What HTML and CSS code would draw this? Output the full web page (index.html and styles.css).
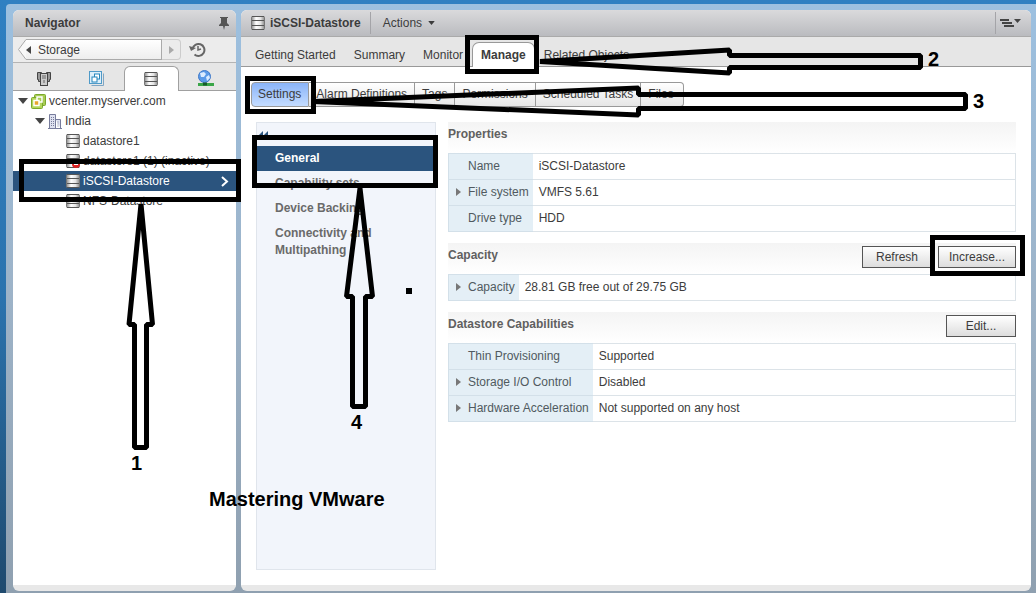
FILE: index.html
```html
<!DOCTYPE html>
<html lang="en">
<head>
  <meta charset="UTF-8">
  <meta name="viewport" content="width=device-width,initial-scale=1.0">
  <title>iSCSI-Datastore - Manage</title>
  <link rel="stylesheet" href="styles.css">
</head>
<body>
  <!-- shared icons -->
  <svg class="defs" width="0" height="0">
    <defs>
      <linearGradient id="metal" x1="0" x2="1">
        <stop offset="0" stop-color="#8a8a8a"/>
        <stop offset=".35" stop-color="#fff"/>
        <stop offset=".7" stop-color="#e4e4e4"/>
        <stop offset="1" stop-color="#8a8a8a"/>
      </linearGradient>
      <symbol id="ds" viewBox="0 0 14 14">
        <rect x=".5" y=".5" width="13" height="13" rx="1" fill="url(#metal)" stroke="#777"/>
        <path d="M1 .5h12M1 4.500h12M1 9.500h12M1 13.500h12" stroke="#555"/>
      </symbol>
      <symbol id="right" viewBox="0 0 5 8"><path d="M0 0l5 4-5 4z" fill="currentColor"/></symbol>
      <symbol id="down" viewBox="0 0 10 6"><path d="M0 0h10L5 6z" fill="currentColor"/></symbol>
    </defs>
  </svg>

  <div class="shell">
    <aside class="panel navigator">
      <header class="titlebar">
        <h2>Navigator</h2>
        <svg class="pin" width="10" height="13" viewBox="0 0 10 13"><path d="M1 0h8v1H8v5l2 2v1H6l-1 4-1-4H0V8l2-2V1H1z" fill="#555"/></svg>
      </header>

      <div class="history">
        <button type="button" class="back">
          <svg width="8" height="21" viewBox="0 0 8 21"><path d="M8 .5L.5 10.500 8 20.500" fill="#f8f8f8" stroke="#aaa"/></svg>
          <span class="back-label"><svg width="5" height="8"><path d="M5 0L0 4l5 4z" fill="#444"/></svg>Storage</span>
        </button>
        <button type="button" class="forward" aria-label="Forward"><svg width="5" height="8"><use href="#right"/></svg></button>
        <button type="button" class="recent" aria-label="Recent">
          <svg width="17" height="16" viewBox="0 0 17 16" fill="none" stroke="#666" stroke-width="2"><path d="M3.500 7a6 6 0 1 1 2 5.500"/><path d="M0 4l2 5 5-3z" fill="#666" stroke="none"/><path d="M9 4v4l3-1" stroke-width="1.500"/></svg>
        </button>
      </div>

      <nav class="icon-tabs">
        <button type="button" aria-label="Hosts">
          <svg width="14" height="16" viewBox="0 0 14 16"><path d="M.5 1.500h4v9h-3v-2h-1zM9.500 1.500h4v7h-1v2h-3z" fill="#999" stroke="#444"/><rect x="3.500" y="2.500" width="7" height="12" fill="#ccc" stroke="#444"/><path d="M5 5h4M5 7h4M7 9v3" stroke="#666"/></svg>
        </button>
        <button type="button" aria-label="Virtual machines">
          <svg width="15" height="15" viewBox="0 0 15 15"><path d="M2.500 14.500h12v-12" fill="none" stroke="#7fa6c4"/><rect x=".5" y=".5" width="12" height="12" fill="#dceffb" stroke="#4f9ac8"/><rect x="5.500" y="3" width="5" height="5" fill="#fff" stroke="#2586bd"/><rect x="3" y="6" width="5" height="5" fill="#fff" stroke="#2586bd"/></svg>
        </button>
        <button type="button" class="active" aria-label="Storage"><svg width="14" height="14"><use href="#ds"/></svg></button>
        <button type="button" aria-label="Networking">
          <svg width="17" height="17" viewBox="0 0 17 17"><circle cx="7.500" cy="6.500" r="6" fill="#5c9be8" stroke="#3f78c8"/><path d="M3 3l4-1 2 2-2 3H4zM9 7l3-2 1 3-3 3z" fill="#dcecff"/><path d="M1 14.500h16" stroke="#3aa648" stroke-width="3"/><path d="M6 14h4" stroke="#165c2a" stroke-width="3"/></svg>
        </button>
      </nav>

      <ul class="tree">
        <li class="lvl0">
          <svg class="twist" width="10" height="6"><use href="#down"/></svg>
          <svg width="15" height="15" viewBox="0 0 15 15"><rect x="3.500" y=".5" width="11" height="11" rx="1" fill="#a8cc54" stroke="#7aa82c"/><rect x=".5" y="3.500" width="11" height="11" rx="1" fill="#b4d65c" stroke="#7aa82c"/><rect x="6" y="3" width="5" height="5" fill="#a8cc54" stroke="#fff" stroke-width="1.500"/><rect x="3" y="6.500" width="5" height="5" fill="#e8a52c" stroke="#fff" stroke-width="1.500"/></svg>
          <a href="#">vcenter.myserver.com</a>
        </li>
        <li class="lvl1">
          <svg class="twist" width="10" height="6"><use href="#down"/></svg>
          <svg width="14" height="15" viewBox="0 0 14 15"><path d="M1.500 14V.5h6V14M7.500 5.500h5V14M0 14.500h14" fill="#dfe2f0" stroke="#777c9c"/><path d="M3.500 3v10M5.500 3v10M10 7.500v6" stroke="#777c9c" stroke-dasharray="1 1"/></svg>
          <a href="#">India</a>
        </li>
        <li class="lvl2"><svg width="14" height="14"><use href="#ds"/></svg><a href="#">datastore1</a></li>
        <li class="lvl2">
          <svg width="14" height="14"><use href="#ds"/><circle cx="10" cy="10" r="4" fill="#d22"/><path d="M8 10h4" stroke="#fff" stroke-width="2"/></svg>
          <a href="#">datastore1 (1) (inactive)</a>
        </li>
        <li class="lvl2 selected">
          <svg width="14" height="14"><use href="#ds"/></svg><a href="#">iSCSI-Datastore</a>
          <svg class="go" width="8" height="11"><path d="M1 1l5 4.500L1 10" fill="none" stroke="#fff" stroke-width="2"/></svg>
        </li>
        <li class="lvl2"><svg width="14" height="14"><use href="#ds"/></svg><a href="#">NFS-Datastore</a></li>
      </ul>
    </aside>

    <main class="panel workspace">
      <header class="titlebar">
        <svg width="14" height="14"><use href="#ds"/></svg>
        <h1>iSCSI-Datastore</h1>
        <button type="button" class="actions">Actions <svg width="7" height="4" viewBox="0 0 10 6"><use href="#down"/></svg></button>
        <button type="button" class="list-menu" aria-label="View menu">
          <svg width="21" height="9" viewBox="0 0 21 9"><path d="M0 1h9M2 4h10M4 7h10" stroke="#444" stroke-width="2"/><path d="M14 0h7l-3.500 4z" fill="#444"/></svg>
        </button>
      </header>

      <nav class="tabs">
        <a href="#">Getting Started</a>
        <a href="#">Summary</a>
        <a href="#">Monitor</a>
        <a href="#" class="active">Manage</a>
        <a href="#">Related Objects</a>
      </nav>

      <div class="body">
        <nav class="subtabs">
          <button type="button" class="active">Settings</button>
          <button type="button">Alarm Definitions</button>
          <button type="button">Tags</button>
          <button type="button">Permissions</button>
          <button type="button">Scheduled Tasks</button>
          <button type="button">Files</button>
        </nav>

        <div class="columns">
          <nav class="sections">
            <button type="button" class="collapse" aria-label="Collapse"><svg width="10" height="8"><path d="M4 0v8L0 4zM9 0v8L5 4z" fill="#2b547e"/></svg></button>
            <a href="#" class="active">General</a>
            <a href="#">Capability sets</a>
            <a href="#">Device Backing</a>
            <a href="#">Connectivity and Multipathing</a>
          </nav>

          <div class="details">
            <section>
              <div class="section-head"><h3>Properties</h3></div>
              <table>
                <tr><th scope="row">Name</th><td>iSCSI-Datastore</td></tr>
                <tr><th scope="row" class="more"><svg width="5" height="8"><use href="#right"/></svg>File system</th><td>VMFS 5.61</td></tr>
                <tr><th scope="row">Drive type</th><td>HDD</td></tr>
              </table>
            </section>

            <section>
              <div class="section-head">
                <h3>Capacity</h3>
                <button type="button">Refresh</button>
                <button type="button" class="wide">Increase...</button>
              </div>
              <table>
                <tr><th scope="row" class="more"><svg width="5" height="8"><use href="#right"/></svg>Capacity</th><td>28.81 GB free out of 29.75 GB</td></tr>
              </table>
            </section>

            <section>
              <div class="section-head">
                <h3>Datastore Capabilities</h3>
                <button type="button">Edit...</button>
              </div>
              <table>
                <tr><th scope="row">Thin Provisioning</th><td>Supported</td></tr>
                <tr><th scope="row" class="more"><svg width="5" height="8"><use href="#right"/></svg>Storage I/O Control</th><td>Disabled</td></tr>
                <tr><th scope="row" class="more"><svg width="5" height="8"><use href="#right"/></svg>Hardware Acceleration</th><td>Not supported on any host</td></tr>
              </table>
            </section>
          </div>
        </div>
      </div>
    </main>
  </div>

  <!-- walkthrough callouts, steps 1 to 4 -->
  <svg class="callouts" width="1036" height="593" viewBox="0 0 1036 593">
    <g class="marks">
      <rect x="21.500" y="161.500" width="217" height="38"/>
      <rect x="467.500" y="37.500" width="69" height="34"/>
      <rect x="247.500" y="78.500" width="66" height="33"/>
      <rect x="254.500" y="137.500" width="181" height="48"/>
      <rect x="932.500" y="237.500" width="90" height="36"/>
      <path d="M141 204L129 324.500h5.500v123h12v-123h6z"/>
      <path d="M540 61.500L729.500 50v5.500H920.500v12H729.500V73z"/>
      <path d="M313 101.500L638.500 88v6.500h327v14h-327V115z"/>
      <path d="M360 188L346.500 296.500h6v110h13v-110h7z"/>
    </g>
    <rect x="406" y="288" width="6" height="6"/>
    <text x="131" y="470">1</text>
    <text x="928" y="66">2</text>
    <text x="973" y="108">3</text>
    <text x="351" y="429">4</text>
    <text x="209" y="506">Mastering VMware</text>
  </svg>
</body>
</html>
```
FILE: styles.css
```css
*{box-sizing:border-box}
body{margin:0;height:100vh;min-height:520px;padding:4px 0 0 6px;overflow:hidden;background:linear-gradient(#2f80c2,#2b73ae 50%,#1f4a6e);font:12px/16px "Liberation Sans",Arial,sans-serif;color:#3c3c3c}
h1,h2,h3{margin:0;font-size:12px;line-height:16px;font-weight:700}
a{color:inherit;text-decoration:none}
button{margin:0;padding:0;border:0;background:none;font:inherit;color:inherit;cursor:pointer}
svg{display:block;flex:none}
.defs{position:absolute}

.shell{display:flex;gap:5px;height:100%;padding:6px 5px 2px 7px;border-top-left-radius:4px;background:linear-gradient(#9cc0e0,#9db3c8 50%,#8fa0b0)}
.panel{display:flex;flex-direction:column;background:#fff;border-radius:6px;border-bottom:6px solid #e8e8e8;overflow:hidden}
.navigator{flex:none;width:223px}
.workspace{flex:1;min-width:0}
.titlebar{display:flex;align-items:center;flex:none;height:27px;border-bottom:1px solid #aaa;background:linear-gradient(#dadadc,#babbbf)}

/* navigator */
.navigator .titlebar{padding:0 7px 0 12px;justify-content:space-between}
.history{display:flex;align-items:center;flex:none;height:26px;padding:0 5px;border-bottom:1px solid #b4b4b4;background:#ececec}
.back{display:flex;align-items:center}
.back-label{display:flex;align-items:center;gap:7px;width:136px;height:21px;border:1px solid #aaa;border-left:0;background:linear-gradient(#fff,#eee)}
.forward{display:flex;align-items:center;justify-content:center;width:19px;height:21px;border:1px solid #ccc;border-left:0;border-radius:0 4px 4px 0;color:#aaa}
.recent{margin-left:8px}
.icon-tabs{display:flex;flex:none;height:28px;padding:3px 4px 0;background:#e6e6e6;box-shadow:inset 0 -1px #a0a0a0}
.icon-tabs button{display:flex;flex:1;align-items:center;justify-content:center}
.icon-tabs .active{border:1px solid #a0a0a0;border-bottom:0;border-radius:6px 6px 0 0;background:#fff}
.tree{margin:0;padding:0;list-style:none}
.tree li{display:flex;align-items:center;gap:3px;height:20px;padding-right:7px}
.tree .twist{color:#444}
.tree .lvl0{padding-left:5px}
.tree .lvl1{padding-left:22px}
.tree .lvl2{padding-left:53px}
.tree .selected{background:#2b547e;color:#fff}
.go{margin-left:auto}

/* workspace header */
.workspace .titlebar{padding-left:10px}
h1{padding:0 9px 0 5px}
.actions,.list-menu{display:flex;align-items:center;gap:6px;height:22px;border-left:1px solid #a4a4a8}
.actions{padding-left:12px}
.list-menu{margin-left:auto;padding:0 10px 0 4px}
.tabs{display:flex;align-items:flex-end;flex:none;height:30px;padding-left:5px;background:#e6e6e6;box-shadow:inset 0 -1px #999}
.tabs a{height:25px;padding:4px 8px;border:1px solid transparent;border-bottom:0;white-space:nowrap}
.tabs .active{border-color:#999;border-radius:7px 7px 0 0;background:#fff;font-weight:700}

/* manage page */
.body{display:flex;flex-direction:column;flex:1;min-height:0;padding:15px 15px 15px 10px}
.subtabs{display:flex;flex:none}
.subtabs button{height:25px;padding:0 7px 2px;border:1px solid #999;border-left-width:0;background:linear-gradient(#fff,#e6e6e6);white-space:nowrap}
.subtabs button:first-child{padding-left:6px;border-left-width:1px;border-radius:4px 0 0 4px}
.subtabs button:last-child{padding-right:9px;border-radius:0 4px 4px 0}
.subtabs .active{background:linear-gradient(#8ab4f8,#c4dcff)}
.columns{display:flex;flex:1;gap:12px;min-height:0;padding:15px 0 0 5px}
.sections{flex:none;width:180px;border:1px solid #e0e5ec;background:#f2f5fb}
.collapse{display:block;padding:8px 2px 7px}
.sections a{display:block;padding:4px 18px;line-height:17px;font-weight:700;color:#6a6a6a}
.sections .active{background:#2b547e;color:#fff}
.details{flex:1;min-width:0}
section{margin-bottom:11px}
.section-head{display:flex;align-items:flex-start;gap:6px;height:31px;padding-top:3px;background:linear-gradient(#f4f4f4,#fff)}
h3{margin-right:auto;color:#606060}
.details h3{padding-top:1px}
.section-head button{min-width:70px;height:22px;border:1px solid #555;background:linear-gradient(#fff,#ddd)}
.section-head .wide{min-width:78px}
table{width:100%;border-collapse:collapse}
tr{height:26px}
th,td{padding:0 0 2px;border:1px solid #dce3e8;text-align:left;white-space:nowrap}
th{width:1px;padding:0 4px 2px 19px;border-right:0;border-color:#d3e0e9;background:#e4eff6;font-weight:400;color:#505a60}
td{padding-left:6px;border-left:0}
.more svg{display:inline-block;margin:0 7px 0 -12px;color:#777}

.callouts{position:absolute;top:0;left:0;pointer-events:none}
.callouts text{font-size:20px;font-weight:700}
.marks{fill:none;stroke:#000;stroke-width:5;stroke-linejoin:bevel}
.marks rect{stroke-linejoin:miter}
```
